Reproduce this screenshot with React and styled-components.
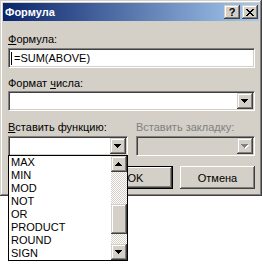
import styled, { createGlobalStyle } from "styled-components";

const GlobalStyle = createGlobalStyle`
  body {
    margin: 0;
    background: #fff;
    font-family: "Liberation Sans", Arial, sans-serif;
    font-size: 11px;
  }
`;

const raised = `
  box-shadow: inset -1px -1px #404040, inset 1px 1px #d4d0c8,
    inset -2px -2px #808080, inset 2px 2px #fff;
`;

const Page = styled.div`
  min-height: 264px;
`;

const Window = styled.div`
  position: relative;
  width: 262px;
  height: 196px;
  box-sizing: border-box;
  padding: 3px;
  background: #d4d0c8;
  ${raised}
  display: flex;
  flex-direction: column;
`;

const TitleBar = styled.div`
  height: 18px;
  display: flex;
  align-items: center;
  padding: 0 1px 0 2px;
  background: linear-gradient(to right, #0a246a, #a6caf0);
`;

const Title = styled.span`
  color: #fff;
  font-weight: bold;
  font-size: 11px;
`;

const CaptionButtons = styled.div`
  margin-left: auto;
  display: flex;
  gap: 2px;
`;

const CapButton = styled.div`
  width: 16px;
  height: 14px;
  box-sizing: border-box;
  background: #d4d0c8;
  ${raised}
  display: flex;
  align-items: center;
  justify-content: center;
  font-weight: bold;
  font-size: 11px;
  color: #000;
`;

const Body = styled.div`
  flex: 1;
  display: flex;
  flex-direction: column;
  padding: 0 4px 0 5px;
`;

const Label = styled.div`
  height: 13px;
  line-height: 13px;
  margin-top: ${(p) => p.$top}px;
  color: ${(p) => (p.$disabled ? "#808080" : "#000")};
  white-space: nowrap;
  u {
    text-decoration: underline;
  }
`;

const Sunken = styled.div`
  position: relative;
  height: 20px;
  box-sizing: border-box;
  margin-top: ${(p) => p.$top || 0}px;
  border: 1px solid;
  border-color: #808080 #fff #fff #808080;
  box-shadow: inset 1px 1px #404040, inset -1px -1px #d4d0c8;
  padding: 1px;
  background: ${(p) => (p.$disabled ? "#d4d0c8" : "#fff")};
  display: flex;
  align-items: center;
`;

const InputText = styled.div`
  flex: 1;
  display: flex;
  align-items: center;
  line-height: 13px;
  padding-left: 1px;
`;

const Caret = styled.span`
  width: 1px;
  height: 13px;
  background: #000;
  margin-right: 2px;
`;

const DropButton = styled.div`
  width: 16px;
  height: 16px;
  box-sizing: border-box;
  background: #d4d0c8;
  ${raised}
  display: flex;
  align-items: center;
  justify-content: center;
`;

const Columns = styled.div`
  display: grid;
  grid-template-columns: 120px 1fr;
  column-gap: 8px;
`;

const Column = styled.div`
  display: flex;
  flex-direction: column;
`;

const ListBox = styled.div`
  position: absolute;
  left: -1px;
  top: 100%;
  width: 120px;
  box-sizing: border-box;
  border: 1px solid #000;
  background: #fff;
  display: flex;
  z-index: 2;
`;

const Items = styled.div`
  flex: 1;
`;

const Item = styled.div`
  height: 13px;
  line-height: 13px;
  padding-left: 2px;
`;

const ScrollBar = styled.div`
  width: 16px;
  display: flex;
  flex-direction: column;
`;

const ScrollButton = styled(DropButton)`
  height: 16px;
`;

const Track = styled.div`
  flex: 1;
  display: flex;
  flex-direction: column;
  background: repeating-conic-gradient(#d4d0c8 0% 25%, #fff 0% 50%) 0 0 / 2px
    2px;
`;

const Thumb = styled.div`
  margin-top: ${(p) => p.$top}px;
  height: ${(p) => p.$size}px;
  background: #d4d0c8;
  ${raised}
`;

const ButtonRow = styled.div`
  display: flex;
  justify-content: flex-end;
  gap: 7px;
  margin-top: 10px;
`;

const Button = styled.div`
  width: 75px;
  height: 23px;
  box-sizing: border-box;
  background: #d4d0c8;
  display: flex;
  align-items: center;
  justify-content: center;
  box-shadow: inset -1px -1px #404040, inset 1px 1px #fff,
    inset -2px -2px #808080, inset 2px 2px #d4d0c8;
  border: ${(p) => (p.$default ? "1px solid #000" : "none")};
`;

function Arrow({ up, disabled }) {
  const fill = disabled ? "#808080" : "#000";
  const rows = up ? [3, 2, 1, 0] : [0, 1, 2, 3];
  return (
    <svg width="8" height="5" shapeRendering="crispEdges">
      {disabled && (
        <g fill="#fff">
          {rows.map((r, i) => (
            <rect key={i} x={r + 1} y={i + 1} width={7 - r * 2} height="1" />
          ))}
        </g>
      )}
      <g fill={fill}>
        {rows.map((r, i) => (
          <rect key={i} x={r} y={i} width={7 - r * 2} height="1" />
        ))}
      </g>
    </svg>
  );
}

function CloseIcon() {
  return (
    <svg width="8" height="7" shapeRendering="crispEdges">
      <path
        d="M0 0h2v1h-2zM6 0h2v1h-2zM1 1h2v1h-2zM5 1h2v1h-2zM2 2h4v1h-4zM3 3h2v1h-2zM2 4h4v1h-4zM1 5h2v1h-2zM5 5h2v1h-2zM0 6h2v1h-2zM6 6h2v1h-2z"
        fill="#000"
      />
    </svg>
  );
}

const functions = ["MAX", "MIN", "MOD", "NOT", "OR", "PRODUCT", "ROUND", "SIGN"];

export default function App() {
  return (
    <Page>
      <GlobalStyle />
      <Window>
        <TitleBar>
          <Title>Формула</Title>
          <CaptionButtons>
            <CapButton>?</CapButton>
            <CapButton>
              <CloseIcon />
            </CapButton>
          </CaptionButtons>
        </TitleBar>
        <Body>
          <Label $top={12}>
            <u>Ф</u>ормула:
          </Label>
          <Sunken $top={2}>
            <InputText>
              <Caret />
              =SUM(ABOVE)
            </InputText>
          </Sunken>
          <Label $top={9}>
            Формат <u>ч</u>исла:
          </Label>
          <Sunken $top={1}>
            <InputText />
            <DropButton>
              <Arrow />
            </DropButton>
          </Sunken>
          <Columns>
            <Column>
              <Label $top={10}>
                <u>В</u>ставить функцию:
              </Label>
              <Sunken $top={2}>
                <InputText />
                <DropButton>
                  <Arrow />
                </DropButton>
                <ListBox>
                  <Items>
                    {functions.map((f) => (
                      <Item key={f}>{f}</Item>
                    ))}
                  </Items>
                  <ScrollBar>
                    <ScrollButton>
                      <Arrow up />
                    </ScrollButton>
                    <Track>
                      <Thumb $top={32} $size={30} />
                    </Track>
                    <ScrollButton>
                      <Arrow />
                    </ScrollButton>
                  </ScrollBar>
                </ListBox>
              </Sunken>
            </Column>
            <Column>
              <Label $top={10} $disabled>
                Вставить закладку:
              </Label>
              <Sunken $top={2} $disabled>
                <InputText />
                <DropButton>
                  <Arrow disabled />
                </DropButton>
              </Sunken>
            </Column>
          </Columns>
          <ButtonRow>
            <Button $default>OK</Button>
            <Button>Отмена</Button>
          </ButtonRow>
        </Body>
      </Window>
    </Page>
  );
}
